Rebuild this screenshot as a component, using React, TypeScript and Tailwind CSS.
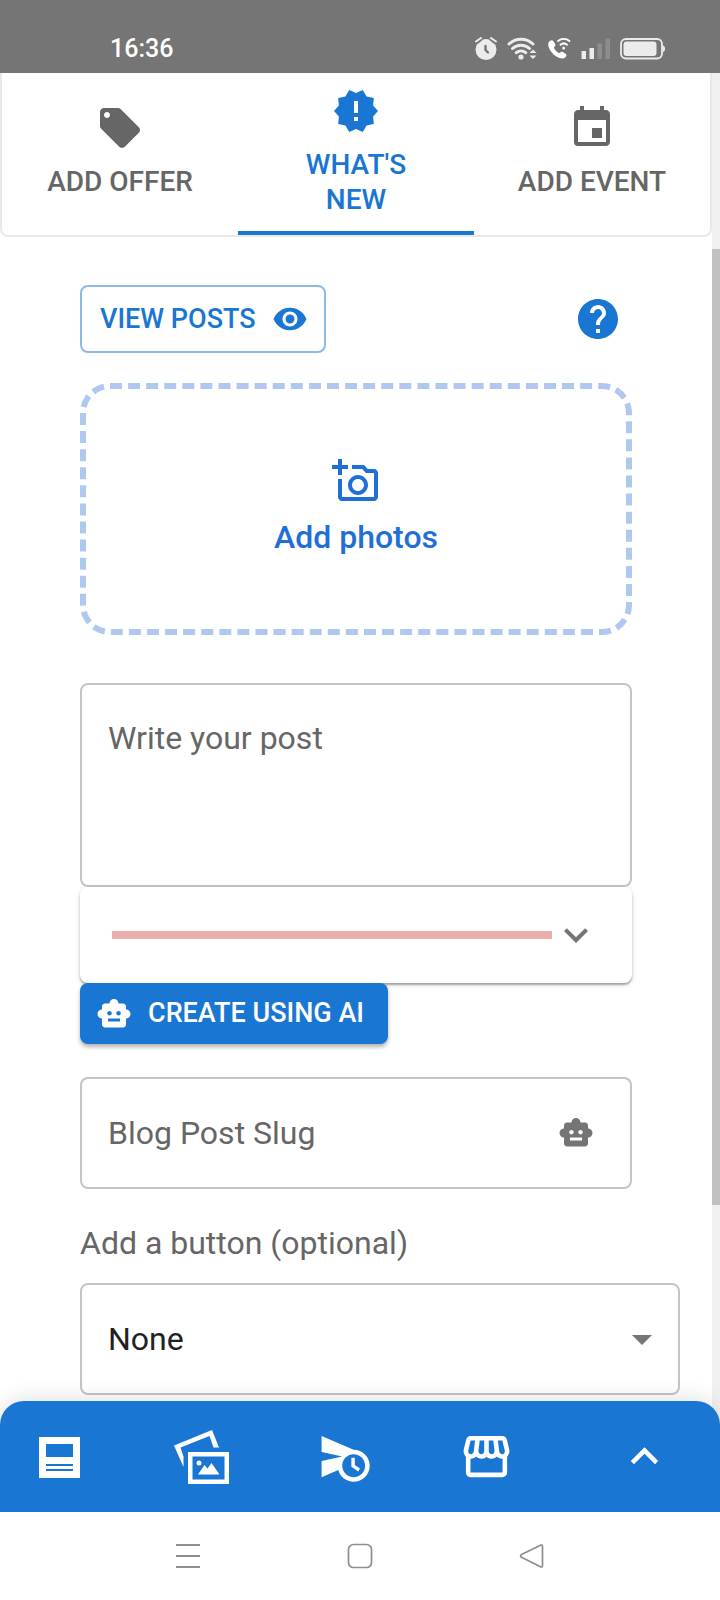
import { useState } from 'react';
import type { ReactNode } from 'react';
import {
  MdArrowDropDown,
  MdEvent,
  MdExpandMore,
  MdHelp,
  MdKeyboardArrowUp,
  MdLocalOffer,
  MdNewReleases,
  MdOutlineAddAPhoto,
  MdScheduleSend,
  MdSmartToy,
  MdStorefront,
  MdVisibility,
} from 'react-icons/md';

const tabs = [
  { id: 'offer', label: 'Add Offer', icon: MdLocalOffer },
  { id: 'news', label: "What's New", icon: MdNewReleases },
  { id: 'event', label: 'Add Event', icon: MdEvent },
];

function StatusBar() {
  return (
    <header className="flex h-[73px] items-end justify-between bg-[#757575] pr-[55px] pb-3 pl-[110px] text-white">
      <span className="text-[25px] leading-6 font-medium">16:36</span>
      <div className="flex items-center gap-[10px] text-[#ececec]">
        {/* Alarm */}
        <svg width="22" height="24" viewBox="0 0 22 24" fill="none">
          <circle cx="11" cy="12.500" r="10.500" fill="currentColor" />
          <path d="M1 5.500l5-4M21 5.500l-5-4" stroke="#757575" strokeWidth="4.500" />
          <path d="M1 4.500l5-3.500M21 4.500l-5-3.500" stroke="currentColor" strokeWidth="2" strokeLinecap="round" />
          <path d="M10.500 9v4l2.500 2.500" stroke="#757575" strokeWidth="2.400" strokeLinecap="round" />
        </svg>
        {/* Wi-Fi */}
        <svg width="30" height="24" viewBox="0 0 30 24" fill="none">
          <path
            d="M2 7a17.500 17.500 0 0 1 24 0M5.500 11.500a12.500 12.500 0 0 1 17 0M9.300 15.700a7 7 0 0 1 9.400 0"
            stroke="currentColor"
            strokeWidth="3"
            strokeLinecap="round"
          />
          <circle cx="14" cy="20" r="2.600" fill="currentColor" />
          <path d="M22.500 16l3.500-3.500 3.500 3.500zM22.500 18.500l3.500 3.500 3.500-3.500z" fill="currentColor" />
        </svg>
        {/* Wi-Fi calling */}
        <svg width="24" height="24" viewBox="0 0 24 24" fill="none" className="text-white">
          <path
            d="M5.500 3.500c-1-.6-4 .8-4.300 3.500C.8 13 9 21.500 15 21.500c3 0 4.500-2 4.500-3.500 0-1.300-3.800-3.400-5-3.300-1 .1-1.500 1.500-2.500 1.300-1.700-.5-4.700-3.500-5-5.200-.1-1 1.300-1.500 1.400-2.600C8.500 7 6.500 4 5.500 3.500z"
            fill="currentColor"
          />
          <path
            d="M11 4a9.500 9.500 0 0 1 11.500 0M13.500 7.700a5.200 5.200 0 0 1 6.500 0"
            stroke="currentColor"
            strokeWidth="2"
            strokeLinecap="round"
          />
          <circle cx="16.700" cy="11" r="1.500" fill="currentColor" />
        </svg>
        {/* Signal */}
        <svg width="29" height="24" viewBox="0 0 29 24" fill="currentColor">
          <rect x="0.500" y="14" width="4.500" height="8" />
          <rect x="8.500" y="11" width="4.500" height="11" />
          <rect x="16.500" y="6.500" width="4.500" height="15.500" fill="#8d8d8d" />
          <rect x="24.500" y="1.500" width="4.500" height="20.500" fill="#8d8d8d" />
        </svg>
        {/* Battery */}
        <svg width="45" height="24" viewBox="0 0 45 24" fill="none">
          <rect x="1" y="2" width="41" height="19.500" rx="5" stroke="currentColor" strokeWidth="1.800" />
          <rect x="3.500" y="4.500" width="33" height="14.500" rx="3" fill="currentColor" />
          <path d="M43 8.500c1.500.5 2 1.500 2 3.200s-.5 2.800-2 3.300z" fill="currentColor" />
        </svg>
      </div>
    </header>
  );
}

function ArticleIcon() {
  return (
    <svg width="55" height="55" viewBox="0 0 55 55" fill="none">
      <path
        fill="currentColor"
        fillRule="evenodd"
        d="M7 8h41v41H7zM14 15v13h27V15zM14 35v2h27v-2zM14 40v2h27v-2z"
      />
    </svg>
  );
}

function GalleryIcon() {
  return (
    <svg width="55" height="55" viewBox="0 0 55 55" fill="none">
      <path fill="currentColor" d="M0 16.500L38 1l7 17.500h-5.500L35.500 7 6.500 18.500 9.500 27.500V38z" />
      <path fill="currentColor" fillRule="evenodd" d="M14 23h41v32H14zM18.500 27.500v23h32v-23z" />
      <circle cx="25" cy="34" r="2.500" fill="currentColor" />
      <path fill="currentColor" d="M24 45.500l6.500-9.500 3 3.500 4-5.500 8 11.500z" />
    </svg>
  );
}

function NavButton({ label, children }: { label: string; children: ReactNode }) {
  return (
    <button type="button" aria-label={label}>
      {children}
    </button>
  );
}

function BottomBar() {
  return (
    <footer className="sticky bottom-0 z-10">
      <nav className="flex h-[111px] items-center gap-[103px] rounded-t-3xl bg-[#1976d2] pr-12 pl-8 text-white shadow-[0_-4px_20px_rgba(0,0,0,0.1)]">
        <div className="flex flex-1 items-center justify-between">
          <NavButton label="Posts">
            <ArticleIcon />
          </NavButton>
          <NavButton label="Gallery">
            <GalleryIcon />
          </NavButton>
          <NavButton label="Scheduled">
            <MdScheduleSend size={55} />
          </NavButton>
          <NavButton label="Store">
            <MdStorefront size={55} />
          </NavButton>
        </div>
        <NavButton label="More">
          <MdKeyboardArrowUp size={55} />
        </NavButton>
      </nav>

      {/* System navigation */}
      <div className="flex h-22 items-center justify-between bg-white px-[175px] text-[#8e8e8e]">
        <NavButton label="Recent apps">
          <svg width="26" height="26" viewBox="0 0 26 26" stroke="currentColor" strokeWidth="2">
            <path d="M1 2h24M1 13h24M1 24h24" />
          </svg>
        </NavButton>
        <NavButton label="Home">
          <svg width="26" height="26" viewBox="0 0 26 26" fill="none" stroke="currentColor" strokeWidth="1.700">
            <rect x="1.500" y="1.500" width="23" height="23" rx="5" />
          </svg>
        </NavButton>
        <NavButton label="Back">
          <svg width="26" height="26" viewBox="0 0 26 26" fill="none" stroke="currentColor" strokeWidth="1.700">
            <path d="M21.500 2.200L2.500 11.500c-1.200.6-1.200 2.200 0 2.800l19 9.500c1.300.6 2-.1 2-1.300v-19c0-1.200-.8-1.900-2-1.300z" />
          </svg>
        </NavButton>
      </div>
    </footer>
  );
}

export default function App() {
  const [tab, setTab] = useState('news');
  const [post, setPost] = useState('');
  const [slug, setSlug] = useState('');
  const [action, setAction] = useState('none');

  return (
    <div className="flex min-h-screen flex-col bg-white font-['Roboto',sans-serif] text-[32px] text-[#666666]">
      <StatusBar />

      <div className="-mb-6 flex flex-1">
        <main className="min-w-0 flex-1 pb-7">
          {/* Tabs */}
          <div role="tablist" className="grid h-41 grid-cols-3 rounded-b-lg border-x-2 border-b-2 border-[#e8eaea]">
            {tabs.map(({ id, label, icon: Icon }) => (
              <button
                key={id}
                type="button"
                role="tab"
                aria-selected={tab === id}
                onClick={() => setTab(id)}
                className={`flex flex-col items-center justify-center gap-3 border-b-4 px-9 pb-px text-[28px] leading-[35px] font-medium uppercase ${
                  tab === id ? 'border-[#1976d2] text-[#1976d2]' : 'border-transparent'
                }`}
              >
                <Icon size={48} className="shrink-0" />
                {label}
              </button>
            ))}
          </div>

          <div className="pt-12 pr-8 pl-20">
            <div className="mr-12 flex flex-col">
              <div className="flex items-center justify-between pr-[10px]">
                <button
                  type="button"
                  className="flex h-17 items-center gap-4 rounded-lg border-2 border-[#1976d2]/50 pr-4 pl-[18px] text-[27px] font-medium text-[#1976d2] uppercase"
                >
                  View Posts
                  <MdVisibility size={36} />
                </button>
                <button type="button" aria-label="Help" className="text-[#1976d2]">
                  <MdHelp size={48} />
                </button>
              </div>

              <button
                type="button"
                className="mt-[30px] flex h-63 flex-col items-center justify-center gap-2 rounded-[30px] border-6 border-dashed border-[#b0c8f0] leading-12 font-medium text-[#1f6fd6]"
              >
                <MdOutlineAddAPhoto size={48} />
                Add photos
              </button>

              <textarea
                aria-label="Write your post"
                placeholder="Write your post"
                value={post}
                onChange={(e) => setPost(e.target.value)}
                className="mt-12 block h-51 resize-none rounded-lg border-2 border-[#c4c4c4] px-[26px] py-[30px] leading-[46px] text-[#212121] outline-none placeholder:text-[#666666]"
              />

              {/* Post strength */}
              <div className="flex h-24 items-center rounded-lg bg-white px-8 shadow-[0_2px_2px_rgba(0,0,0,0.3),0_2px_6px_rgba(0,0,0,0.12)]">
                <div className="h-2 flex-1 bg-[#ebaeae]" />
                <button type="button" aria-label="Show details" className="text-[#757575]">
                  <MdExpandMore size={48} />
                </button>
              </div>

              <button
                type="button"
                className="relative flex h-[61px] items-center gap-4 self-start rounded-lg bg-[#1976d2] pr-6 pl-4 text-[27px] font-medium text-white uppercase shadow-[0_3px_4px_rgba(0,0,0,0.3)]"
              >
                <MdSmartToy size={36} />
                Create using AI
              </button>

              <div className="mt-[33px] flex h-28 items-center rounded-lg border-2 border-[#c4c4c4] pr-9 pl-[26px]">
                <input
                  type="text"
                  aria-label="Blog Post Slug"
                  placeholder="Blog Post Slug"
                  value={slug}
                  onChange={(e) => setSlug(e.target.value)}
                  className="min-w-0 flex-1 text-[#212121] outline-none placeholder:text-[#666666]"
                />
                <button type="button" aria-label="Generate slug" className="text-[#757575]">
                  <MdSmartToy size={36} />
                </button>
              </div>
            </div>

            <label htmlFor="action" className="mt-[30px] mb-4 block leading-12">
              Add a button (optional)
            </label>
            <div className="relative">
              <select
                id="action"
                value={action}
                onChange={(e) => setAction(e.target.value)}
                className="block h-28 w-full appearance-none rounded-lg border-2 border-[#c4c4c4] px-[26px] text-[#212121] outline-none"
              >
                <option value="none">None</option>
              </select>
              <MdArrowDropDown
                size={48}
                className="pointer-events-none absolute inset-y-0 right-[14px] my-auto text-[#757575]"
              />
            </div>
          </div>
        </main>

        {/* Scroll track */}
        <div aria-hidden="true" className="flex w-2 flex-col bg-[#f0f0f0]">
          <div className="flex-[176]" />
          <div className="flex-[956] bg-[#c1c1c1]" />
          <div className="flex-[220]" />
        </div>
      </div>

      <BottomBar />
    </div>
  );
}
